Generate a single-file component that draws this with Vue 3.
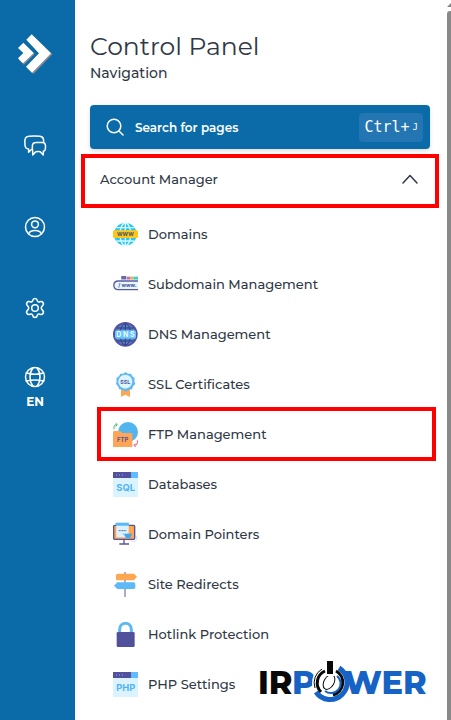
<script setup>
import { ref } from "vue";

const open = ref(true);
const items = [
  { id: "domains", label: "Domains" },
  { id: "subdomains", label: "Subdomain Management" },
  { id: "dns", label: "DNS Management" },
  { id: "ssl", label: "SSL Certificates" },
  { id: "ftp", label: "FTP Management", marked: true },
  { id: "sql", label: "Databases" },
  { id: "pointers", label: "Domain Pointers" },
  { id: "redirects", label: "Site Redirects" },
  { id: "hotlink", label: "Hotlink Protection" },
  { id: "php", label: "PHP Settings" },
];
</script>

<template>
  <div class="shell">
    <aside class="rail">
      <a class="logo" href="#" aria-label="Home">
        <svg viewBox="51 41 108 120" width="36" height="40">
          <g fill="#8b8f93">
            <path d="M99 46L157 102L100 161L81 143L121 103L83 62Z" />
            <path d="M73 71L104 101L72 133L56 118L73 102Z" />
          </g>
          <g fill="#fff">
            <path d="M95 42L153 99L96 157L78 139L117 99L79 58Z" />
            <path d="M70 67L101 98L69 129L54 114L70 98L54 83Z" />
          </g>
        </svg>
      </a>
      <nav class="tools">
        <button class="tool" type="button" aria-label="Messages">
          <svg viewBox="0 0 24 24" width="24" height="24">
            <path d="M8.4 15.5L5.6 18.2V15.1C3.2 14.8 2.3 13.8 2 11.5C1.6 8.8 1.7 6 2.4 4.3C3 2.9 4 2.5 6 2.3C9.5 1.9 13.5 1.9 17 2.3C19.3 2.6 20.4 3.6 20.6 6V8.3" />
            <path d="M13 8.5H19.5C21.5 8.5 22.3 9.5 22.5 11.5C22.6 13.2 22.5 14.8 22 16C21.7 16.7 21.2 17.1 20.3 17.3V21L17.2 17.7C15.5 17.5 14.2 17.6 12.8 17.7L9.7 21V17.3C9.3 15 9.2 12.5 9.5 10.8C9.8 9.3 10.8 8.5 13 8.5Z" />
          </svg>
        </button>
        <button class="tool" type="button" aria-label="Account">
          <svg viewBox="0 0 24 24" width="24" height="24">
            <circle cx="12" cy="12" r="9.5" />
            <circle cx="12" cy="9.3" r="3.4" />
            <path d="M5.7 18.8C6.5 16.5 8.3 15.6 12 15.6S17.5 16.5 18.3 18.8" />
          </svg>
        </button>
        <button class="tool" type="button" aria-label="Settings">
          <svg viewBox="0 0 24 24" width="24" height="24">
            <circle cx="12" cy="12" r="3.3" />
            <path d="M9.7 4.5C10 3 10.6 2.5 12 2.5S14 3 14.3 4.5C14.6 5.8 15.6 6.3 16.8 5.8C18.5 5.1 19.3 5.3 20 6.5C20.9 8 20.7 8.8 19.4 9.9C17.9 11.2 17.9 12.8 19.4 14.1C20.7 15.2 20.9 16 20 17.5C19.3 18.7 18.5 18.9 16.8 18.2C15.6 17.7 14.6 18.2 14.3 19.5C14 21 13.4 21.5 12 21.5S10 21 9.7 19.5C9.4 18.2 8.4 17.7 7.2 18.2C5.5 18.9 4.7 18.7 4 17.5C3.1 16 3.3 15.2 4.6 14.1C6.1 12.8 6.1 11.2 4.6 9.9C3.3 8.8 3.1 8 4 6.5C4.7 5.3 5.5 5.1 7.2 5.8C8.4 6.3 9.4 5.8 9.7 4.5Z" />
          </svg>
        </button>
        <button class="tool language" type="button">
          <svg viewBox="0 0 24 24" width="24" height="24">
            <circle cx="12" cy="12" r="9.5" />
            <path d="M10 2.8C6 8 6 16 10 21.2M14 2.8C18 8 18 16 14 21.2M3.3 8C8 9.5 16 9.5 20.7 8M3.3 16C8 14.5 16 14.5 20.7 16" />
          </svg>
          <span>EN</span>
        </button>
      </nav>
    </aside>

    <main class="panel">
      <h1>Control Panel</h1>
      <p class="subtitle">Navigation</p>

      <button class="search" type="button">
        <svg viewBox="0 0 18 18" width="18" height="18">
          <circle cx="8" cy="8" r="6.8" />
          <path d="M13 13L17 17" />
        </svg>
        <span class="search-label">Search for pages</span>
        <kbd>Ctrl+<small>J</small></kbd>
      </button>

      <button class="section marked" type="button" :aria-expanded="open" @click="open = !open">
        <span>Account Manager</span>
        <svg :class="{ closed: !open }" viewBox="0 0 16 10" width="16" height="10">
          <path d="M1 9L8 1.5L15 9" />
        </svg>
      </button>

      <ul v-show="open" class="menu">
        <li v-for="item in items" :key="item.id">
          <a class="item" :class="{ marked: item.marked }" href="#">
            <svg class="icon" viewBox="0 0 75 75" width="25" height="25" aria-hidden="true">
              <g v-if="item.id === 'domains'">
                <circle cx="37" cy="37" r="34" fill="#23c7ef" />
                <g fill="none" stroke="#d8f7ff" stroke-width="4">
                  <ellipse cx="37" cy="37" rx="16" ry="34" />
                  <path d="M37 3V71M10 17H64M10 57H64" />
                </g>
                <rect y="25" width="75" height="23" rx="4" fill="#ffc61a" />
                <text x="37" y="42" font-size="16" fill="#4b5563">WWW</text>
              </g>
              <g v-else-if="item.id === 'subdomains'">
                <path d="M24 12H75V24H24Z" fill="#c3e9ff" />
                <path d="M25 12H39V22H25Z" fill="#6b66a8" />
                <path d="M41 15H51V22H41Z" fill="#ef647b" />
                <path d="M51 15H62V22H51Z" fill="#fbab58" />
                <path d="M62 15H75V22H62Z" fill="#42d49c" />
                <path d="M75 27H16C-2 27 -2 53 16 53H75" fill="#e4f6ff" stroke="#5b5ba5" stroke-width="4" />
                <text x="43" y="45" font-size="16" fill="#4f5194">/ www.</text>
              </g>
              <g v-else-if="item.id === 'dns'">
                <circle cx="37" cy="37" r="37" fill="#5354a2" />
                <circle cx="37" cy="37" r="31" fill="#557fc1" />
                <g fill="none" stroke="#353c83" stroke-width="3">
                  <ellipse cx="37" cy="37" rx="16" ry="32" />
                  <path d="M37 5V69M12 18H62M12 57H62" />
                </g>
                <rect x="6" y="25" width="63" height="25" rx="5" fill="#66c5fb" />
                <text x="37" y="45" font-size="21" fill="#e8f9ff">D N S</text>
              </g>
              <g v-else-if="item.id === 'ssl'">
                <path d="M24 50H51V75L37 68L24 75Z" fill="#ffa653" />
                <path d="M37 0L45 5L54 5L58 13L65 19L64 28L67 36L60 43L57 52L47 53L38 59L29 53L19 52L15 43L9 36L11 28L10 19L18 13L22 5L31 5Z" fill="#5db9f4" />
                <circle cx="37" cy="29" r="21" fill="#def4ff" />
                <text x="37" y="35" font-size="16" fill="#4c579d">SSL</text>
              </g>
              <g v-else-if="item.id === 'ftp'">
                <circle cx="45" cy="30" r="30" fill="#53b5ee" />
                <path d="M0 31Q0 27 4 27H22L28 33H54Q58 33 58 37V75H0Z" fill="#ffa557" />
                <path d="M3 22V14Q3 8 12 8M8 3L13 8L8 13" fill="none" stroke="#42b978" stroke-width="3" />
                <path d="M73 55V62Q73 70 64 70M68 65L63 70L68 75" fill="none" stroke="#df5684" stroke-width="3" />
                <text x="29" y="60" font-size="18" fill="#5d528b">FTP</text>
              </g>
              <g v-else-if="item.id === 'sql' || item.id === 'php'">
                <rect width="75" height="75" fill="#daf3ff" />
                <rect width="54" height="18" fill="#53509d" />
                <rect x="54" width="21" height="18" fill="#5fbbfb" />
                <path d="M9 9H12M18 9H21M27 9H30" stroke="#66bafb" stroke-width="3" />
                <text x="38" y="57" font-size="28" fill="#53b4f3">{{ item.id.toUpperCase() }}</text>
              </g>
              <g v-else-if="item.id === 'pointers'">
                <rect x="2" y="10" width="63" height="42" rx="3" fill="#ffa653" stroke="#50549b" stroke-width="4" />
                <rect x="10" y="2" width="37" height="44" fill="#dcf3ff" />
                <rect x="8" y="2" width="40" height="9" rx="2" fill="#57baf6" />
                <path d="M17 26H40" stroke="#5971b6" stroke-width="3" stroke-dasharray="4 1" />
                <path d="M29 36H34L39 47H51L56 36H36" fill="#43a7eb" stroke="#43a7eb" stroke-width="2" />
                <path d="M19 66H48M33 54V65" stroke="#57579c" stroke-width="4" />
                <path d="M53 55Q65 61 69 55C75 50 73 41 67 42" fill="none" stroke="#9aa1bb" stroke-width="2" stroke-dasharray="3 3" />
              </g>
              <g v-else-if="item.id === 'redirects'">
                <path d="M36 0V75" stroke="#8a80ad" stroke-width="4" />
                <path d="M14 5H63L72 14L63 25H14Q9 25 9 20V10Q9 5 14 5Z" fill="#ffa650" />
                <path d="M62 31Q67 31 67 36V46Q67 51 62 51H13L3 41L13 31Z" fill="#5dbaf7" />
              </g>
              <g v-else-if="item.id === 'hotlink'">
                <path d="M20 35V22C20 -2 55 -2 55 22V35" fill="none" stroke="#5bb7f5" stroke-width="9" />
                <rect x="11" y="30" width="54" height="45" rx="4" fill="#51509b" />
              </g>
            </svg>
            <span>{{ item.label }}</span>
          </a>
        </li>
      </ul>
    </main>

    <div class="scroll" aria-hidden="true">
      <svg viewBox="0 0 4 11" width="4" height="11">
        <path d="M0 7L4 3V7Z" fill="#858585" />
      </svg>
      <div class="thumb"></div>
    </div>

    <svg class="watermark" viewBox="0 0 172 42" width="172" height="42" role="img" aria-label="IRPOWER">
      <g font-size="32">
        <text x="-1" y="33" fill="#080808">IR</text>
        <text x="33" y="33" fill="#1763c5">P</text>
        <text x="85" y="33" fill="#1763c5">WER</text>
      </g>
      <circle cx="71" cy="22" r="18" fill="#fff" />
      <path d="M80 7A17 17 0 1 1 57 31" fill="none" stroke="#1763c5" stroke-width="5" />
      <path d="M56 27A16 16 0 0 1 63 8" fill="none" stroke="#080808" stroke-width="1" />
      <path d="M66 10A13 13 0 0 0 62 31" fill="none" stroke="#080808" stroke-width="3" />
      <path d="M77 10A13 13 0 0 1 74 34" fill="none" stroke="#080808" stroke-width="3" />
      <path d="M78 15A9 9 0 0 1 66 30" fill="none" stroke="#1763c5" stroke-width="2" />
      <ellipse cx="70" cy="21" rx="5" ry="8" fill="none" stroke="#080808" stroke-width="1" transform="rotate(30 70 21)" />
      <rect x="67" y="0" width="8" height="15" fill="#fff" />
      <rect x="68" y="0" width="6" height="13" fill="#080808" />
    </svg>
  </div>
</template>

<style>
body {
  margin: 0;
  background: #fff;
}
</style>

<style scoped>
.shell {
  position: relative;
  display: grid;
  grid-template-columns: 75px 1fr 4px;
  min-height: 100vh;
  color: #303846;
  font-family: Montserrat, Inter, sans-serif;
}
button {
  margin: 0;
  border: 0;
  padding: 0;
  background: none;
  color: inherit;
  font: inherit;
  cursor: pointer;
}
a {
  color: inherit;
  text-decoration: none;
}
.rail {
  display: flex;
  flex-direction: column;
  align-items: center;
  box-sizing: border-box;
  padding: 34px 5px 0 0;
  background: #0b6ba8;
  color: #fff;
}
.logo svg,
.tool svg {
  display: block;
}
.tools {
  display: flex;
  flex-direction: column;
  align-items: center;
  gap: 57px;
  padding-top: 60px;
}
.tool svg,
.search svg,
.section svg {
  fill: none;
  stroke: currentColor;
  stroke-width: 1.5;
  stroke-linecap: round;
  stroke-linejoin: round;
}
.language {
  margin-top: -12px;
  font-size: 12px;
  font-weight: 700;
  line-height: 16px;
}
.language span {
  display: block;
  padding-top: 5px;
}
.panel {
  padding: 30px 17px 0 15px;
}
h1 {
  margin: 0;
  font-size: 25px;
  font-weight: 400;
  line-height: 32px;
}
.subtitle {
  margin: 0 0 21px;
  font-size: 14px;
  font-weight: 500;
  line-height: 22px;
}
.search {
  display: flex;
  align-items: center;
  gap: 11px;
  box-sizing: border-box;
  width: 100%;
  height: 44px;
  padding: 0 7px 0 16px;
  border-radius: 4px;
  background: #0b6ba8;
  box-shadow: 0 2px 4px #0002;
  color: #fff;
}
.search-label {
  flex: 1;
  font-size: 12px;
  font-weight: 600;
  text-align: left;
}
kbd {
  display: flex;
  align-items: center;
  height: 29px;
  padding: 0 5px;
  border-radius: 4px;
  background: #2376b2;
  font-family: "DejaVu Sans Mono", monospace;
  font-size: 15px;
}
kbd small {
  padding-left: 3px;
  font-size: 9px;
}
.section {
  position: relative;
  display: flex;
  justify-content: space-between;
  align-items: center;
  width: 100%;
  height: 60px;
  padding: 0 12px 0 10px;
  box-sizing: border-box;
  font-size: 13px;
  font-weight: 500;
}
.closed {
  transform: rotate(180deg);
}
.marked::after {
  content: "";
  position: absolute;
  inset: 5px -9px 1px;
  border: 4px solid #fe0000;
  pointer-events: none;
}
.menu {
  margin: 0;
  padding: 0 0 10px;
  list-style: none;
}
.item {
  position: relative;
  display: flex;
  align-items: center;
  gap: 10px;
  height: 50px;
  padding-left: 23px;
  font-size: 13px;
  font-weight: 500;
}
.item.marked::after {
  inset: -2px -6px -2px 7px;
}
.icon text {
  font-family: Inter, sans-serif;
  font-weight: 700;
  text-anchor: middle;
}
.scroll {
  display: flex;
  flex-direction: column;
}
.thumb {
  flex: 1;
  border-radius: 3px 0 0 0;
  background: #898989;
}
.watermark {
  position: absolute;
  right: 20px;
  bottom: 17px;
  font-weight: 800;
}
</style>
